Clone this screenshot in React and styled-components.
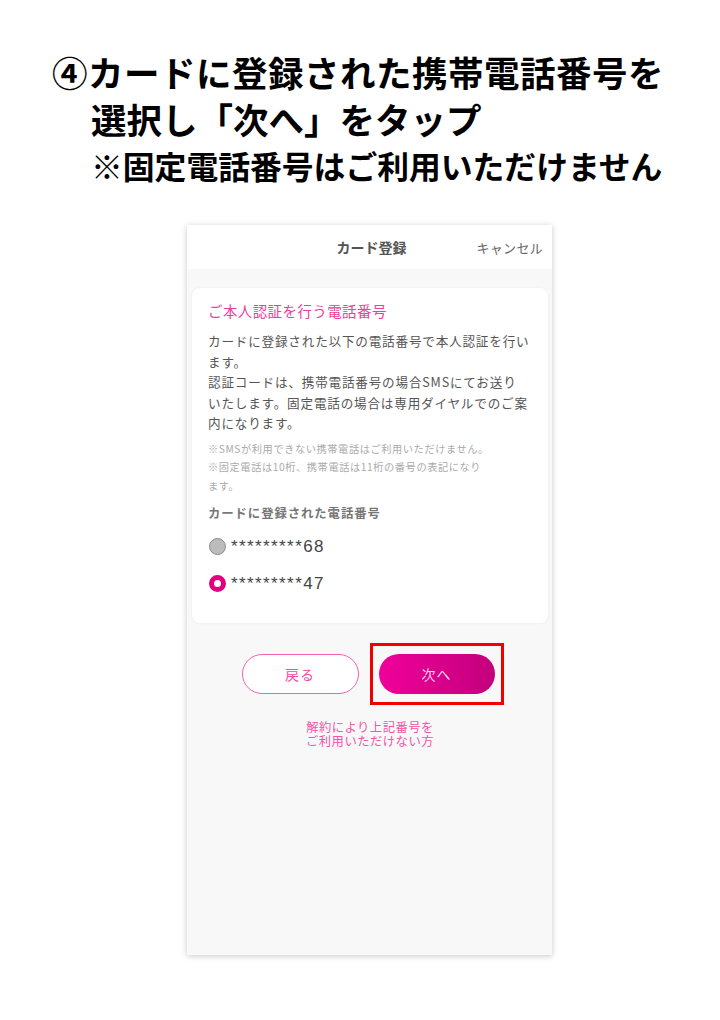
import React from "react";
import styled, { createGlobalStyle } from "styled-components";

const Global = createGlobalStyle`
  html, body { margin: 0; padding: 0; background: #fff; }
  body { font-family: "Noto Sans CJK JP", "Noto Sans", sans-serif; }
`;

const Page = styled.div`
  width: 720px;
  height: 1020px;
  display: flex;
  flex-direction: column;
  align-items: flex-start;
`;

const Heading = styled.div`
  padding: 48px 0 0 52px;
  font-weight: 700;
  color: #000;
  display: flex;
  flex-direction: column;
`;

const HeadLine = styled.div`
  font-size: ${(p) => p.$size}px;
  line-height: ${(p) => p.$lh}px;
  padding-left: ${(p) => p.$indent}px;
  letter-spacing: ${(p) => p.$ls || 0}px;
  white-space: nowrap;
`;

const Phone = styled.div`
  margin: 37px 0 0 187px;
  width: 365px;
  height: 730px;
  background: #f8f8f8;
  box-shadow: 0 1px 6px rgba(0, 0, 0, 0.22);
  display: flex;
  flex-direction: column;
`;

const Header = styled.div`
  height: 44px;
  background: #fff;
  display: grid;
  grid-template-columns: 1fr auto 1fr;
  align-items: center;
`;

const HeaderTitle = styled.div`
  grid-column: 2;
  font-size: 14px;
  font-weight: 700;
  color: #555;
  padding-left: 4px;
`;

const Cancel = styled.div`
  justify-self: end;
  padding-right: 9px;
  font-size: 13px;
  color: #666;
  letter-spacing: 0.3px;
`;

const Card = styled.div`
  margin: 19px 4px 0 5px;
  background: #fff;
  border-radius: 8px;
  box-shadow: 0 0 3px rgba(0, 0, 0, 0.06);
  padding: 12px 16px 31px 16px;
  display: flex;
  flex-direction: column;
`;

const CardTitle = styled.div`
  font-size: 14.5px;
  color: #ec3e9e;
  line-height: 22px;
  letter-spacing: 0.4px;
  margin-bottom: 9px;
`;

const Body = styled.div`
  font-size: 12.6px;
  line-height: 20.5px;
  color: #555;
  letter-spacing: 0.8px;
`;

const Note = styled.div`
  margin-top: 6px;
  font-size: 10.2px;
  line-height: 18.5px;
  color: #aaa;
  letter-spacing: 0.6px;
`;

const Label = styled.div`
  margin-top: 9px;
  font-size: 12.4px;
  font-weight: 700;
  color: #777;
  letter-spacing: 0.9px;
  line-height: 18px;
`;

const Options = styled.div`
  margin-top: 15px;
  display: flex;
  flex-direction: column;
  gap: 19px;
`;

const Option = styled.label`
  display: flex;
  align-items: center;
  gap: 5px;
  margin-left: 1px;
  height: 18px;
`;

const Radio = styled.span`
  width: 17px;
  height: 17px;
  box-sizing: border-box;
  border-radius: 50%;
  flex: none;
  background: ${(p) => (p.$on ? "#fff" : "#bcbcbc")};
  border: ${(p) => (p.$on ? "5.5px solid #e0007e" : "1.5px solid #8a8a8a")};
`;

const Number = styled.span`
  font-family: "Liberation Sans", Arial, sans-serif;
  font-size: 17px;
  color: #444;
  letter-spacing: 1.4px;
  position: relative;
  top: 1px;
`;

const Buttons = styled.div`
  margin-top: 20px;
  display: flex;
  justify-content: center;
  align-items: center;
  gap: 11px;
  padding-left: 6px;
`;

const BackButton = styled.button`
  width: 117px;
  height: 40px;
  border-radius: 20px;
  border: 1.5px solid #f262ad;
  background: #fff;
  color: #ec4ea2;
  font-family: inherit;
  font-size: 14px;
  letter-spacing: 1px;
`;

const Highlight = styled.div`
  border: 3px solid #f20000;
  padding: 8px 6px;
  display: flex;
`;

const NextButton = styled.button`
  width: 116px;
  height: 40px;
  border-radius: 20px;
  border: none;
  background: linear-gradient(90deg, #f0009a 0%, #c3007c 100%);
  color: #fbd7ec;
  font-family: inherit;
  font-size: 14px;
  letter-spacing: 1px;
`;

const Link = styled.div`
  margin-top: 15px;
  text-align: center;
  font-size: 12.3px;
  line-height: 14px;
  color: #f155a8;
  letter-spacing: 0.5px;
  padding-left: 1px;
`;

export default function App() {
  return (
    <Page>
      <Global />
      <Heading>
        <HeadLine $size={35.5} $lh={47} $indent={0} $ls={0.5}>
          ④カードに登録された携帯電話番号を
        </HeadLine>
        <HeadLine $size={35.5} $lh={47} $indent={39}>
          選択し「次へ」をタップ
        </HeadLine>
        <HeadLine $size={31.8} $lh={46} $indent={39}>
          ※固定電話番号はご利用いただけません
        </HeadLine>
      </Heading>
      <Phone>
        <Header>
          <HeaderTitle>カード登録</HeaderTitle>
          <Cancel>キャンセル</Cancel>
        </Header>
        <Card>
          <CardTitle>ご本人認証を行う電話番号</CardTitle>
          <Body>
            カードに登録された以下の電話番号で本人認証を行い
            <br />
            ます。
            <br />
            認証コードは、携帯電話番号の場合SMSにてお送り
            <br />
            いたします。固定電話の場合は専用ダイヤルでのご案
            <br />
            内になります。
          </Body>
          <Note>
            ※SMSが利用できない携帯電話はご利用いただけません。
            <br />
            ※固定電話は10桁、携帯電話は11桁の番号の表記になり
            <br />
            ます。
          </Note>
          <Label>カードに登録された電話番号</Label>
          <Options>
            <Option>
              <Radio />
              <Number>*********68</Number>
            </Option>
            <Option>
              <Radio $on />
              <Number>*********47</Number>
            </Option>
          </Options>
        </Card>
        <Buttons>
          <BackButton>戻る</BackButton>
          <Highlight>
            <NextButton>次へ</NextButton>
          </Highlight>
        </Buttons>
        <Link>
          解約により上記番号を
          <br />
          ご利用いただけない方
        </Link>
      </Phone>
    </Page>
  );
}
